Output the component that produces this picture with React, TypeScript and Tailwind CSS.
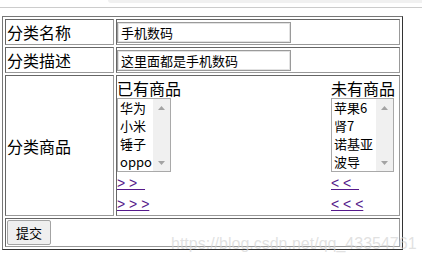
import React from "react";

const cjk = "font-['Noto_Sans_CJK_SC',sans-serif]";

function ListBox({ items, width }: { items: string[]; width: string }) {
  return (
    <div className={`flex h-[74px] border border-[#a9a9a9] bg-white ${width}`}>
      <div className="flex-1 pl-[2px] text-[13px] leading-[18px]">
        {items.map((it) => (
          <div key={it} className="whitespace-nowrap">
            {it}
          </div>
        ))}
      </div>
      <div className="flex w-[17px] flex-col justify-between bg-[#f0f0f0]">
        <div className="flex h-[17px] items-center justify-center">
          <svg width="7" height="4" viewBox="0 0 7 4">
            <polygon points="0,4 3.5,0 7,4" fill="#a3a3a3" />
          </svg>
        </div>
        <div className="flex h-[17px] items-center justify-center">
          <svg width="7" height="4" viewBox="0 0 7 4">
            <polygon points="0,0 7,0 3.5,4" fill="#a3a3a3" />
          </svg>
        </div>
      </div>
    </div>
  );
}

function Goods({
  title,
  items,
  width,
  links,
}: {
  title: string;
  items: string[];
  width: string;
  links: string[];
}) {
  return (
    <div className="flex flex-col items-start">
      <div className="text-[16px] leading-[20px]">{title}</div>
      <ListBox items={items} width={width} />
      <a
        href="#"
        className="mt-[1px] font-['Liberation_Sans',sans-serif] text-[14px] leading-[21px] text-[#551a8b] underline"
      >
        {links[0]}
      </a>
      <a
        href="#"
        className="font-['Liberation_Sans',sans-serif] text-[14px] leading-[20px] text-[#551a8b] underline"
      >
        {links[1]}
      </a>
    </div>
  );
}

export default function App() {
  const cell =
    "border border-[#666] border-r-[#999] border-b-[#999] p-[1px] align-middle";
  const cell2 =
    "border border-[#666] border-r-[#999] border-b-[#999] py-[1px] pl-0 pr-[1px] align-middle";
  const input =
    "h-[21px] w-[174px] border border-[#9a9a9a] bg-white pl-[3px] text-[13px] text-black shadow-[inset_0_0_0_1px_#e2e2e2] outline-none";

  return (
    <div className={`relative h-[263px] w-[422px] overflow-hidden bg-white text-black ${cjk}`}>
      <div className="flex h-[3px]">
        <div className="ml-[108px] flex-1 rounded-bl-[6px] bg-[#f1f1f1]" />
      </div>
      <div className="mt-[4px] h-px w-full bg-[#cccccc]" />

      <table className="ml-[2px] mt-[8px] w-[401px] table-fixed border-separate border-spacing-[2px] border border-[#777] border-r-[#333] border-b-[#333]">
        <tbody>
          <tr>
            <td className={`${cell} w-[109px]`}>
              <div className="text-[16px] leading-[22px]">分类名称</div>
            </td>
            <td className={cell2}>
              <div className="flex h-[22px] items-center">
                <input className={input} readOnly value="手机数码" />
              </div>
            </td>
          </tr>
          <tr>
            <td className={cell}>
              <div className="text-[16px] leading-[22px]">分类描述</div>
            </td>
            <td className={cell2}>
              <div className="flex h-[22px] items-center">
                <input className={input} readOnly value="这里面都是手机数码" />
              </div>
            </td>
          </tr>
          <tr>
            <td className={cell}>
              <div className="text-[16px] leading-[22px]">分类商品</div>
            </td>
            <td className={cell2}>
              <div className="flex justify-between pr-[3px] pt-[1px]">
                <Goods
                  title="已有商品"
                  items={["华为", "小米", "锤子", "oppo"]}
                  width="w-[54px]"
                  links={["> >\u00a0\u00a0", "> > > "]}
                />
                <div className="w-[64px]">
                  <Goods
                    title="未有商品"
                    items={["苹果6", "肾7", "诺基亚", "波导"]}
                    width="w-[63px]"
                    links={["< <\u00a0\u00a0", "< < < "]}
                  />
                </div>
              </div>
            </td>
          </tr>
          <tr>
            <td className={cell} colSpan={2}>
              <button className="flex h-[25px] w-[44px] items-center justify-center rounded-[2px] border border-[#a3a3a3] bg-[#efefef] text-[13px]">
                提交
              </button>
            </td>
          </tr>
        </tbody>
      </table>

      <div className="pointer-events-none absolute left-[171px] top-[236px] whitespace-nowrap font-['Liberation_Sans',sans-serif] text-[16px] leading-[16px] text-[#d4d4d4]/70">
        https://blog.csdn.net/qq_43354761
      </div>
    </div>
  );
}
